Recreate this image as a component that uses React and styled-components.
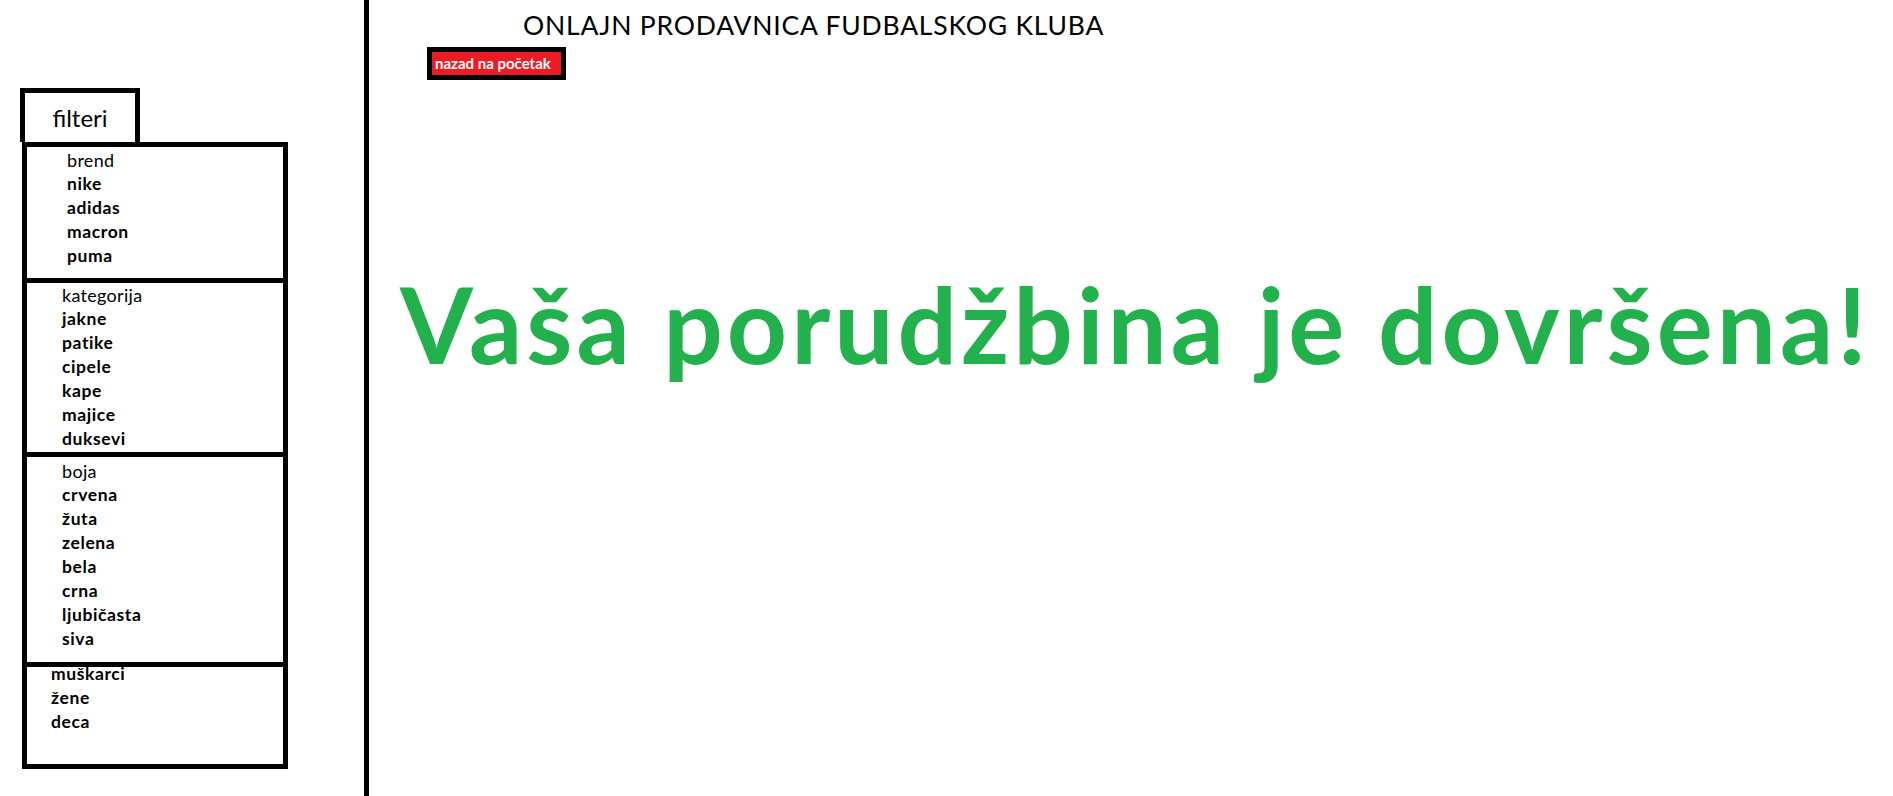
import React from "react";
import styled, { createGlobalStyle } from "styled-components";

const GlobalStyle = createGlobalStyle`
  body {
    margin: 0;
    background: #fff;
    color: #000;
    font-family: Lato, "Liberation Sans", sans-serif;
  }
`;

const sections = [
  { title: "brend", items: ["nike", "adidas", "macron", "puma"], height: 130, top: 1, left: 40 },
  {
    title: "kategorija",
    items: ["jakne", "patike", "cipele", "kape", "majice", "duksevi"],
    height: 169,
    top: 0,
    left: 35,
  },
  {
    title: "boja",
    items: ["crvena", "žuta", "zelena", "bela", "crna", "ljubičasta", "siva"],
    height: 203,
    top: 2,
    left: 35,
  },
  { title: null, items: ["muškarci", "žene", "deca"], height: 102, top: -5, left: 24, last: true },
];

const App = () => {
  return (
    <Page>
      <GlobalStyle />
      <Sidebar>
        <Tab>filteri</Tab>
        <FilterBox>
          {sections.map((s, i) => (
            <Section key={i} $height={s.height} $last={s.last} $left={s.left}>
              <List $top={s.top}>
                {s.title && <Heading>{s.title}</Heading>}
                {s.items.map((it) => (
                  <Item key={it}>{it}</Item>
                ))}
              </List>
            </Section>
          ))}
        </FilterBox>
      </Sidebar>
      <Main>
        <Title>ONLAJN PRODAVNICA FUDBALSKOG KLUBA</Title>
        <BackBtn>nazad na početak</BackBtn>
        <Done>Vaša porudžbina je dovršena!</Done>
      </Main>
    </Page>
  );
};

export default App;

const Page = styled.div`
  display: flex;
  height: 100vh;
  overflow: hidden;
`;
const Sidebar = styled.aside`
  width: 369px;
  height: 100vh;
  box-sizing: border-box;
  border-right: 5px solid #000;
  display: flex;
  flex-direction: column;
  align-items: flex-start;
  padding-top: 88px;
  flex-shrink: 0;
`;
const Tab = styled.div`
  margin-left: 20px;
  width: 110px;
  height: 49px;
  border: 5px solid #000;
  border-bottom: none;
  display: flex;
  align-items: center;
  justify-content: center;
  font-size: 24px;
  line-height: 49px;
`;
const FilterBox = styled.div`
  margin-left: 22px;
  width: 256px;
  border: 5px solid #000;
`;
const Section = styled.div`
  height: ${(p) => p.$height}px;
  padding-left: ${(p) => p.$left}px;
  border-bottom: ${(p) => (p.$last ? "none" : "5px solid #000")};
`;
const List = styled.div`
  display: flex;
  flex-direction: column;
  margin-top: ${(p) => p.$top}px;
`;
const Heading = styled.span`
  font-size: 18px;
  line-height: 24px;
  letter-spacing: 0.3px;
`;
const Item = styled.span`
  font-size: 17.5px;
  font-weight: 700;
  line-height: 24px;
  letter-spacing: 0.6px;
`;
const Main = styled.main`
  flex: 1;
  display: flex;
  flex-direction: column;
  align-items: flex-start;
`;
const Title = styled.h1`
  margin: 10px 0 0 154px;
  font-size: 26.5px;
  font-weight: 400;
  line-height: 1.2;
  letter-spacing: 0.8px;
`;
const BackBtn = styled.button`
  margin: 5px 0 0 58px;
  width: 139px;
  height: 33px;
  padding: 0 0 0 3px;
  border: 5px solid #000;
  background: #ed1c24;
  color: #fff;
  font-family: Lato, "Liberation Sans", sans-serif;
  font-size: 15px;
  font-weight: 700;
  text-align: left;
  line-height: 23px;
  white-space: nowrap;
`;
const Done = styled.h2`
  margin: 180px 0 0 31px;
  color: #22b14c;
  font-size: 105px;
  font-weight: 700;
  line-height: 1.2;
  letter-spacing: 4px;
  white-space: nowrap;
`;
